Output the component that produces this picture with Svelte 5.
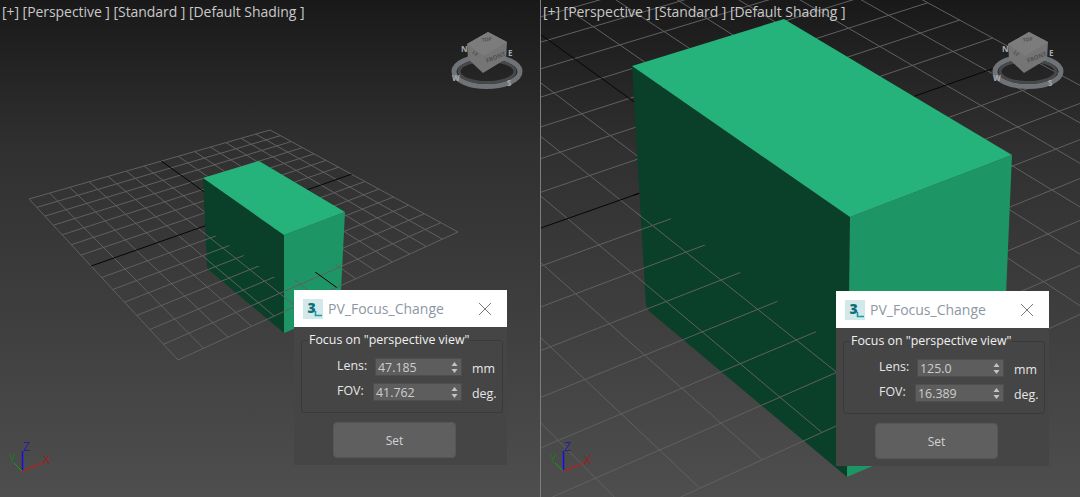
<script lang="ts">
	type Pt = [number, number];

	// grid corners as seen in the left viewport: left, top, right, bottom
	const corners: Pt[] = [[29, 199], [270, 130], [458, 232], [178, 360]];
	const cells = 14;

	// the right viewport is the same camera with a longer lens, so it just scales
	const zoomed = ([x, y]: Pt): Pt => [270 + 2.65 * (x - 270), 245.5 + 2.65 * (y - 245.5)];

	function homography([p0, p1, p2, p3]: Pt[]) {
		const dx1 = p1[0] - p2[0], dx2 = p3[0] - p2[0], sx = p0[0] - p1[0] + p2[0] - p3[0];
		const dy1 = p1[1] - p2[1], dy2 = p3[1] - p2[1], sy = p0[1] - p1[1] + p2[1] - p3[1];
		const d = dx1 * dy2 - dx2 * dy1;
		const g = (sx * dy2 - dx2 * sy) / d;
		const h = (dx1 * sy - sx * dy1) / d;
		return (u: number, v: number): Pt => {
			const w = g * u + h * v + 1;
			return [
				(p1[0] - p0[0] + g * p1[0]) * u / w + (p3[0] - p0[0] + h * p3[0]) * v / w + p0[0] / w,
				(p1[1] - p0[1] + g * p1[1]) * u / w + (p3[1] - p0[1] + h * p3[1]) * v / w + p0[1] / w
			];
		};
	}

	function gridPaths(quad: Pt[]) {
		const at = homography(quad);
		let thin = '';
		let axes = '';
		for (let i = 0; i <= cells; i++) {
			const t = i / cells;
			const [a, b, c, d] = [at(t, 0), at(t, 1), at(0, t), at(1, t)];
			const seg = `M${a[0]} ${a[1]}L${b[0]} ${b[1]}M${c[0]} ${c[1]}L${d[0]} ${d[1]}`;
			if (i === cells / 2) axes = seg;
			else thin += seg;
		}
		return { thin, axes };
	}

	const pts = (list: Pt[]) => list.map((p) => p.join(',')).join(' ');

	const views = [
		{
			id: 'a',
			side: 'left',
			grid: gridPaths(corners),
			top: [[203, 178], [259, 161], [345, 212], [284, 235]] as Pt[],
			dark: [[203, 178], [284, 235], [284, 333], [209, 270], [207, 267]] as Pt[],
			light: [[284, 235], [345, 212], [340, 310], [284, 333]] as Pt[],
			under: [[203, 227], [283, 283], [341, 263], [340, 310], [284, 333], [209, 270], [207, 267]] as Pt[],
			lens: '47.185',
			fov: '41.762'
		},
		{
			id: 'b',
			side: 'right',
			grid: gridPaths(corners.map(zoomed)),
			top: [[91, 66], [243, 19], [471, 155], [309, 217]] as Pt[],
			dark: [[91, 66], [309, 217], [306, 477], [108, 311], [105, 305]] as Pt[],
			light: [[309, 217], [471, 155], [460, 411], [306, 477]] as Pt[],
			under: [[92, 189], [309, 358], [462, 296], [460, 411], [306, 477], [108, 311], [105, 305]] as Pt[],
			lens: '125.0',
			fov: '16.389'
		}
	];
</script>

{#snippet spinner(value: string, wide: boolean)}
	<div class="spinner" class:wide>
		<span>{value}</span>
		<svg width="7" height="11" viewBox="0 0 7 11" aria-hidden="true">
			<path d="M3.5 0 L6.5 4 H0.5 Z M0.5 7 H6.5 L3.5 11 Z" fill="#c4c4c4" />
		</svg>
	</div>
{/snippet}

<main class="screen">
	{#each views as view, i (view.id)}
		{#if i > 0}<div class="divider"></div>{/if}
		<section class="viewport {view.side}">
			<svg class="scene" width="540" height="497" aria-hidden="true">
				<defs>
					<clipPath id="under-{view.id}"><polygon points={pts(view.under)} /></clipPath>
				</defs>

				<path d={view.grid.thin} class="grid" />
				<path d={view.grid.axes} class="axis" />

				<polygon points={pts(view.dark)} fill="#0a3f2a" />
				<polygon points={pts(view.light)} fill="#1e9565" />
				<polygon points={pts(view.top)} fill="#26b27b" />

				<g clip-path="url(#under-{view.id})">
					<path d={view.grid.thin} class="grid" />
					<path d={view.grid.axes} class="axis" />
				</g>

				<!-- view cube -->
				<g class="gizmo">
					<ellipse cx="487" cy="71.5" rx="33" ry="15" fill="none" stroke="#6f7276" stroke-width="5" />
					<ellipse cx="487" cy="71.5" rx="28" ry="11" fill="none" stroke="#46484a" stroke-width="3" />
					<polygon points="467,44 488,32 507,42 506,59 483,73 468,59" fill="#757575" />
					<polygon points="467,44 488,32 507,42 484,56" fill="#7c7c7c" />
					<text transform="translate(487 63) rotate(-22)" class="cube-text">FRONT</text>
					<text transform="translate(472 53) rotate(40)" class="cube-text small">LE</text>
					<text transform="translate(482 42) rotate(-8)" class="cube-text small">TOP</text>
					<text x="452" y="81" class="compass">W</text>
					<text x="461" y="52" class="compass">N</text>
					<text x="508" y="56" class="compass">E</text>
					<text x="507" y="86" class="compass">S</text>
				</g>

				<!-- axis tripod -->
				<g class="tripod">
					<line x1="22.5" y1="471" x2="22.5" y2="451" stroke="#1010e0" stroke-width="1.5" />
					<line x1="22" y1="471" x2="14" y2="463" stroke="#12a012" />
					<line x1="22" y1="471" x2="43" y2="463" stroke="#d01818" stroke-width="1.2" />
					<text x="23" y="451" fill="#2020a0">Z</text>
					<text x="9" y="463" fill="#1a7a1a">Y</text>
					<text x="43" y="464" fill="#982020">X</text>
				</g>
			</svg>

			<p class="viewport-label">[+] [Perspective ] [Standard ] [Default Shading ]</p>

			<div class="dialog">
				<header class="titlebar">
					<svg class="app-icon" width="20" height="20" viewBox="0 0 20 20" aria-hidden="true">
						<rect width="20" height="20" fill="#d3e8e8" />
						<text x="4.5" y="13.5" class="icon-three">3</text>
						<path d="M12.5 12 V16.5 H19" fill="none" stroke="#1b9aa6" stroke-width="1.6" />
					</svg>
					<h1>PV_Focus_Change</h1>
					<svg class="close" width="14" height="14" viewBox="0 0 14 14" aria-hidden="true">
						<path d="M1 1 L13 13 M13 1 L1 13" stroke="#7a7a7a" fill="none" />
					</svg>
				</header>

				<div class="dialog-body">
					<fieldset>
						<legend>Focus on "perspective view"</legend>
						<div class="row">
							<span class="label">Lens:</span>
							{@render spinner(view.lens, false)}
							<span class="unit">mm</span>
						</div>
						<div class="row">
							<span class="label">FOV:</span>
							{@render spinner(view.fov, true)}
							<span class="unit">deg.</span>
						</div>
					</fieldset>
					<button type="button">Set</button>
				</div>
			</div>
		</section>
	{/each}
</main>

<style>
	:global(body) {
		margin: 0;
		overflow: hidden;
	}

	.screen {
		display: flex;
		width: 1080px;
		height: 497px;
		overflow: hidden;
		font-family: "Open Sans", "Noto Sans", sans-serif;
	}

	.divider {
		flex: 0 0 1px;
		background: #7d7d7d;
	}

	.viewport {
		position: relative;
		flex: 0 0 539px;
		overflow: hidden;
		background: linear-gradient(#191919 0, #303030 30%, #414141 70%, #4e4e4e 100%);
	}

	.viewport.left {
		flex-basis: 540px;
	}

	.scene {
		position: absolute;
		inset: 0;
	}

	.grid {
		fill: none;
		stroke: #606060;
		stroke-width: 1;
	}

	.axis {
		fill: none;
		stroke: #060606;
		stroke-width: 1;
	}

	.cube-text {
		fill: #4f4f4f;
		font-size: 6px;
		font-weight: 700;
	}

	.cube-text.small {
		font-size: 5px;
	}

	.compass {
		fill: #a8abae;
		font-size: 8px;
		font-weight: 700;
	}

	.tripod text {
		font-size: 12px;
	}

	.viewport-label {
		position: absolute;
		top: 3px;
		left: 2px;
		margin: 0;
		color: #c9c9c9;
		font-size: 14px;
		line-height: 18px;
		letter-spacing: -0.05px;
		white-space: nowrap;
	}

	.dialog {
		position: absolute;
		top: 290px;
		left: 294px;
		display: flex;
		width: 213px;
		height: 175px;
		flex-direction: column;
		background: #454545;
	}

	.right .dialog {
		top: 291px;
		left: 295px;
	}

	.titlebar {
		display: flex;
		height: 37px;
		padding: 0 15px 0 9px;
		align-items: center;
		background: #fff;
	}

	.app-icon {
		flex: none;
	}

	.icon-three {
		fill: #0f6f78;
		font-size: 14px;
		font-weight: 800;
	}

	h1 {
		flex: 1;
		margin: 0 0 0 5px;
		color: #8d97a3;
		font-size: 14px;
		font-weight: 400;
	}

	.close {
		flex: none;
	}

	.dialog-body {
		display: flex;
		flex: 1;
		padding: 6px 4px 7px 7px;
		flex-direction: column;
		align-items: center;
	}

	fieldset {
		display: flex;
		box-sizing: border-box;
		width: 202px;
		height: 80px;
		margin: 0 0 9px;
		padding: 11px 5px 0 0;
		flex-direction: column;
		gap: 7px;
		border: 1px solid #3a3a3a;
		border-radius: 3px;
	}

	legend {
		margin-left: 6px;
		padding: 0 1px;
		color: #f0f0f0;
		font-size: 12.4px;
		line-height: 14px;
	}

	.row {
		display: flex;
		height: 18px;
		align-items: center;
		color: #e6e6e6;
		font-size: 12.4px;
	}

	.label {
		width: 36px;
		margin-left: 35px;
		margin-top: -3px;
	}

	.spinner {
		display: flex;
		box-sizing: border-box;
		width: 87px;
		height: 18px;
		margin-left: 2px;
		padding: 0 3px 0 2px;
		align-items: center;
		justify-content: space-between;
		color: #cdcdcd;
		background: #5d5d5d;
		border: 1px solid #4e4e4e;
	}

	.spinner.wide {
		width: 89px;
		margin-left: 0;
	}

	.unit {
		margin-top: 3px;
		margin-left: 10px;
	}

	button {
		width: 123px;
		height: 36px;
		margin-right: 15px;
		padding: 0;
		color: #d2d2d2;
		background: #5f5f5f;
		border: 1px solid #565656;
		border-radius: 4px;
		font: inherit;
		font-size: 12px;
	}
</style>
